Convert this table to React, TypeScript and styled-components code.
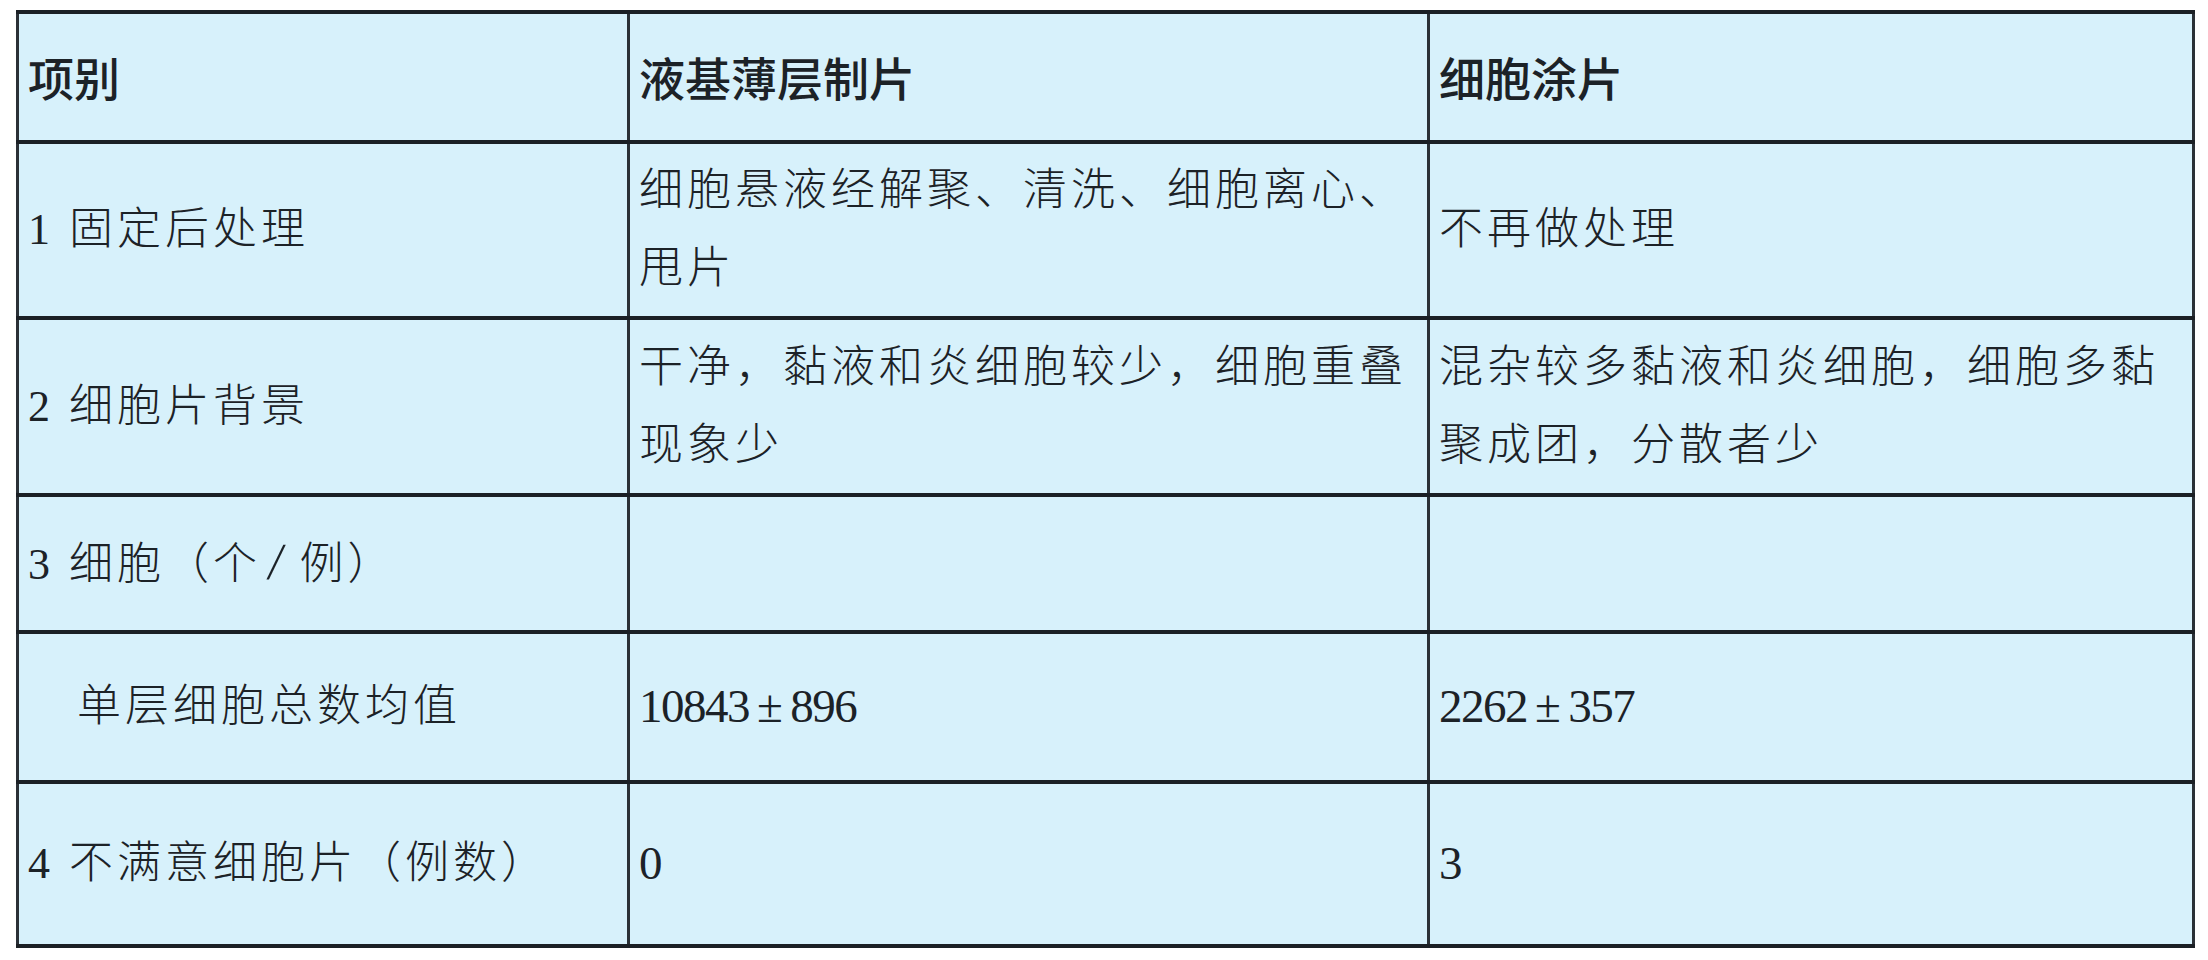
import styled, { createGlobalStyle } from 'styled-components';

const GlobalStyle = createGlobalStyle`
  html, body {
    margin: 0;
    padding: 0;
    background: #ffffff;
  }
`;

const rows = [
  { h: 176, label: '1 固定后处理', lbc: '细胞悬液经解聚、清洗、细胞离心、甩片', smear: '不再做处理' },
  { h: 177, label: '2 细胞片背景', lbc: '干净，黏液和炎细胞较少，细胞重叠现象少', smear: '混杂较多黏液和炎细胞，细胞多黏聚成团，分散者少' },
  { h: 137, label: '3 细胞（个/例）', lbc: '', smear: '' },
  { h: 150, label: '单层细胞总数均值', lbc: ['10843', '896'], smear: ['2262', '357'], indent: true },
  { h: 164, label: '4 不满意细胞片（例数）', lbc: ['0'], smear: ['3'] },
];

function Label({ text }: { text: string }) {
  const parts = text.split('/');
  if (parts.length === 1) return <>{text}</>;
  return (
    <>
      {parts[0]}<Slash>/</Slash>{parts[1]}
    </>
  );
}

function Value({ v }: { v: string | string[] }) {
  if (Array.isArray(v)) {
    return (
      <Num>
        {v[0]}
        {v.length > 1 && <Pm>±</Pm>}
        {v[1]}
      </Num>
    );
  }
  return <>{v}</>;
}

function App() {
  return (
    <>
      <GlobalStyle />
      <Page>
        <Table>
          <colgroup>
            <Col $w={611} />
            <Col $w={800} />
            <Col $w={765} />
          </colgroup>
          <tbody>
            <Row $h={130}>
              <HeadCell>项别</HeadCell>
              <HeadCell>液基薄层制片</HeadCell>
              <HeadCell>细胞涂片</HeadCell>
            </Row>
            {rows.map((r) => (
              <Row key={r.label} $h={r.h}>
                <Cell $indent={r.indent}><Label text={r.label} /></Cell>
                <Cell><Value v={r.lbc} /></Cell>
                <Cell><Value v={r.smear} /></Cell>
              </Row>
            ))}
          </tbody>
        </Table>
      </Page>
    </>
  );
}

const Page = styled.div`
  padding: 10px 0 0 16px;
`;

const Table = styled.table`
  border-collapse: collapse;
  table-layout: fixed;
  width: 2176px;
  background: #d7f1fb;
  color: #1c2227;
`;

const Col = styled.col<{ $w: number }>`
  width: ${ ({ $w }) => $w }px;
`;

const Row = styled.tr<{ $h: number }>`
  height: ${ ({ $h }) => $h }px;
`;

const HeadCell = styled.td`
  border-top: 4px solid #1b2025;
  border-bottom: 4px solid #1b2025;
  border-left: 3px solid #2a3036;
  border-right: 3px solid #2a3036;
  padding: 0 8px 0 9px;
  vertical-align: middle;
  font-family: "Noto Sans CJK SC", sans-serif;
  font-weight: 500;
  font-size: 46px;
  line-height: 1.2;
`;

const Cell = styled.td<{ $indent?: boolean }>`
  border-top: 4px solid #1b2025;
  border-bottom: 4px solid #1b2025;
  border-left: 3px solid #2a3036;
  border-right: 3px solid #2a3036;
  padding: 0 8px 0 ${ ({ $indent }) => ($indent ? 58 : 9) }px;
  vertical-align: middle;
  font-family: "Liberation Serif", "Noto Sans CJK SC", serif;
  font-weight: 300;
  font-size: 44px;
  letter-spacing: 4px;
  line-height: 78px;
`;

const Num = styled.span`
  font-family: "Liberation Serif", serif;
  font-size: 47px;
  letter-spacing: -1.5px;
`;

const Pm = styled.span`
  margin: 0 9px 0 8px;
`;

const Slash = styled.span`
  display: inline-block;
  margin: 0 12px 0 8px;
  font-size: 52px;
  transform: skewX(-8deg);
`;

export default App;
